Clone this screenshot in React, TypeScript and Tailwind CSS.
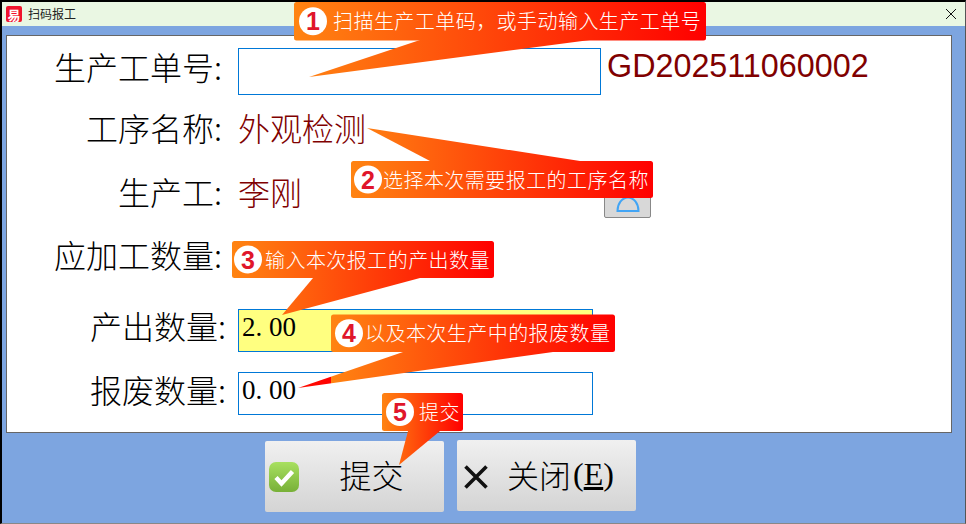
const CJK = "font-['Liberation_Serif','Noto_Sans_CJK_SC',serif]";

type CalloutProps = {
  id: string;
  num: string;
  text: string;
  box: [number, number, number, number];
  tail: [number, number, number, number, number, number];
  cx: number;
  textX: number;
};

// each callout is one shape: rounded body + tail, gradient repeats past the body's edges
function Callout({ id, num, text, box, tail, cx, textX }: CalloutProps) {
  const [l, t, r, b] = box;
  const [x1, y1, x2, y2, x3, y3] = tail;
  const cy = (t + b) / 2;
  return (
    <>
      <svg className="absolute left-0 top-0 pointer-events-none" width="966" height="524">
        <defs>
          <linearGradient id={id} gradientUnits="userSpaceOnUse" x1={l} y1="0" x2={r} y2="0" spreadMethod="repeat">
            <stop offset="0" stopColor="#ff8412" />
            <stop offset="1" stopColor="#ff0000" />
          </linearGradient>
        </defs>
        <rect x={l} y={t} width={r - l} height={b - t} rx="2.5" fill={`url(#${id})`} />
        <polygon points={`${x1},${y1} ${x2},${y2} ${x3},${y3}`} fill={`url(#${id})`} />
        <circle cx={cx} cy={cy} r="14" fill="#fff" />
      </svg>
      <span
        className="absolute w-[28px] text-center text-[25px] leading-[28px] font-bold text-[#e0162b] font-['Liberation_Sans',sans-serif]"
        style={{ left: cx - 14, top: cy - 14 }}
      >
        {num}
      </span>
      <span
        className="absolute whitespace-nowrap text-[20px] leading-[24px] tracking-[0.45px] text-white font-['Noto_Sans_CJK_SC',sans-serif] font-light"
        style={{ left: textX, top: cy - 12 }}
      >
        {text}
      </span>
    </>
  );
}

function Row({
  className,
  labelClass,
  label,
  children,
}: {
  className: string;
  labelClass?: string;
  label: string;
  children?: React.ReactNode;
}) {
  return (
    <div className={`flex items-center ${className}`}>
      <span
        className={`text-[32px] leading-[40px] text-black whitespace-nowrap font-['Noto_Sans_CJK_SC',sans-serif] font-light ${labelClass ?? ""}`}
      >
        {label}
      </span>
      {children}
    </div>
  );
}

function Value({ children }: { children: React.ReactNode }) {
  return (
    <span className="text-[32px] leading-[40px] text-[#800000] tracking-normal whitespace-nowrap font-['Noto_Sans_CJK_SC',sans-serif] font-light">
      {children}
    </span>
  );
}

export default function App() {
  return (
    <div className="relative w-[966px] h-[524px] overflow-hidden bg-[#7da5e0] border-t-2 border-l-2 border-r border-b border-t-black border-l-black border-r-[#555] border-b-[#888] flex flex-col">
      <div className="h-[24px] shrink-0 bg-[#eaf7e3] flex items-center pl-1 pr-[8px]">
        <span className="w-4 h-4 rounded-[2px] bg-[#f0142d] flex items-center justify-center text-white text-[13px] leading-none font-bold font-['Noto_Sans_CJK_SC',sans-serif]">
          易
        </span>
        <span className="ml-[6px] text-[12px] text-[#222] font-['Noto_Sans_CJK_SC',sans-serif]">扫码报工</span>
        <svg className="ml-auto" width="12" height="12" viewBox="0 0 12 12">
          <path d="M1 1 L11 11 M11 1 L1 11" stroke="#111" strokeWidth="1" />
        </svg>
      </div>

      <div className="mt-[9px] ml-[4px] mr-[13px] h-[398px] shrink-0 bg-white border border-[#666] flex flex-col">
        <Row className="h-[47px] mt-[12px] pl-[47px]" labelClass="mb-[12px]" label="生产工单号:">
          <div className="ml-[16px] w-[363px] h-[47px] border border-[#0078d7] bg-white" />
          <span className="ml-[6px] mb-[12px] text-[32.3px] leading-[40px] text-[#800000] font-['Liberation_Sans',sans-serif]">
            GD202511060002
          </span>
        </Row>
        <Row className="h-[40px] mt-[12px] pl-[79px]" label="工序名称:">
          <span className="ml-[16px]"><Value>外观检测</Value></span>
        </Row>
        <Row className="h-[40px] mt-[24px] pl-[111px]" label="生产工:">
          <span className="ml-[16px]"><Value>李刚</Value></span>
          <div className="ml-[302px] mt-[8px] w-[47px] h-[46px] bg-[#d8d8d8] border border-[#888] rounded-[2px] flex items-end justify-center">
            <svg width="24" height="16" viewBox="0 0 24 16" className="mb-[5px]">
              <path d="M1.5 15 A10.5 13.5 0 0 1 22.5 15 Z" fill="none" stroke="#42a5f5" strokeWidth="2" />
            </svg>
          </div>
        </Row>
        <Row className="h-[40px] mt-[23px] pl-[47px]" label="应加工数量:" />
        <Row className="h-[43px] mt-[35px] pl-[83px]" labelClass="mb-[12px]" label="产出数量:">
          <div className={`ml-[12px] w-[355px] h-[43px] border border-[#0078d7] bg-[#ffff80] pl-[3px] text-[27px] leading-[34px] text-black ${CJK}`}>
            2<span className="tracking-[6.75px]">.</span>00
          </div>
        </Row>
        <Row className="h-[43px] mt-[20px] pl-[83px]" labelClass="mb-[10px]" label="报废数量:">
          <div className={`ml-[12px] w-[355px] h-[43px] border border-[#0078d7] bg-white pl-[3px] text-[27px] leading-[34px] text-black ${CJK}`}>
            0<span className="tracking-[6.75px]">.</span>00
          </div>
        </Row>
      </div>

      <div className="flex items-start pl-[263px] gap-[13px] mt-[7px]">
        <button className="relative mt-[1px] w-[179px] h-[71px] rounded-[2px] bg-gradient-to-b from-[#f0f0f0] to-[#d4d4d4] flex items-center justify-center pl-[34px] pb-[6px] text-[32px] text-black font-['Noto_Sans_CJK_SC',sans-serif] font-light">
          <svg className="absolute left-[4px] top-[21px]" width="30" height="30" viewBox="0 0 30 30">
            <defs>
              <linearGradient id="ok" x1="0" y1="0" x2="0" y2="1">
                <stop offset="0" stopColor="#a8e060" />
                <stop offset="1" stopColor="#78b038" />
              </linearGradient>
            </defs>
            <rect width="30" height="30" rx="7" fill="url(#ok)" />
            <path d="M7 15.5 L12.5 21.5 L23.5 9.5" fill="none" stroke="#fff" strokeWidth="4.4" />
          </svg>
          提交
        </button>
        <button className="relative w-[179px] h-[71px] rounded-[2px] bg-gradient-to-b from-[#f0f0f0] to-[#d4d4d4] flex items-center pl-[50px] pb-[4px] text-[32px] text-black font-['Noto_Sans_CJK_SC',sans-serif] font-light whitespace-nowrap">
          <svg className="absolute left-[7px] top-[25px]" width="24" height="24" viewBox="0 0 24 24">
            <path d="M1.5 1.5 L22.5 22.5 M22.5 1.5 L1.5 22.5" stroke="#111" strokeWidth="3.6" />
          </svg>
          关闭<span className="font-['Liberation_Serif',serif] ml-[2px]">(<span className="underline">E</span>)</span>
        </button>
      </div>

      <div className="absolute left-[-2px] top-[-2px]">
        <Callout id="c1" num="1" text="扫描生产工单码，或手动输入生产工单号" box={[294, 2, 706, 40.5]} tail={[420, 40, 309, 77, 590, 40]} cx={313} textX={333} />
        <Callout id="c2" num="2" text="选择本次需要报工的工序名称" box={[351, 161, 653, 198]} tail={[430, 161, 367, 128, 580, 161]} cx={368} textX={383} />
        <Callout id="c3" num="3" text="输入本次报工的产出数量" box={[232, 241, 494, 278]} tail={[313, 278, 282, 315, 420, 278]} cx={248} textX={265} />
        <Callout id="c4" num="4" text="以及本次生产中的报废数量" box={[331, 314.5, 615, 352]} tail={[403, 352, 298, 388, 553, 352]} cx={349} textX={365} />
        <Callout id="c5" num="5" text="提交" box={[382, 393, 463, 431]} tail={[408, 431, 399, 465, 440, 431]} cx={400} textX={419} />
      </div>
    </div>
  );
}
